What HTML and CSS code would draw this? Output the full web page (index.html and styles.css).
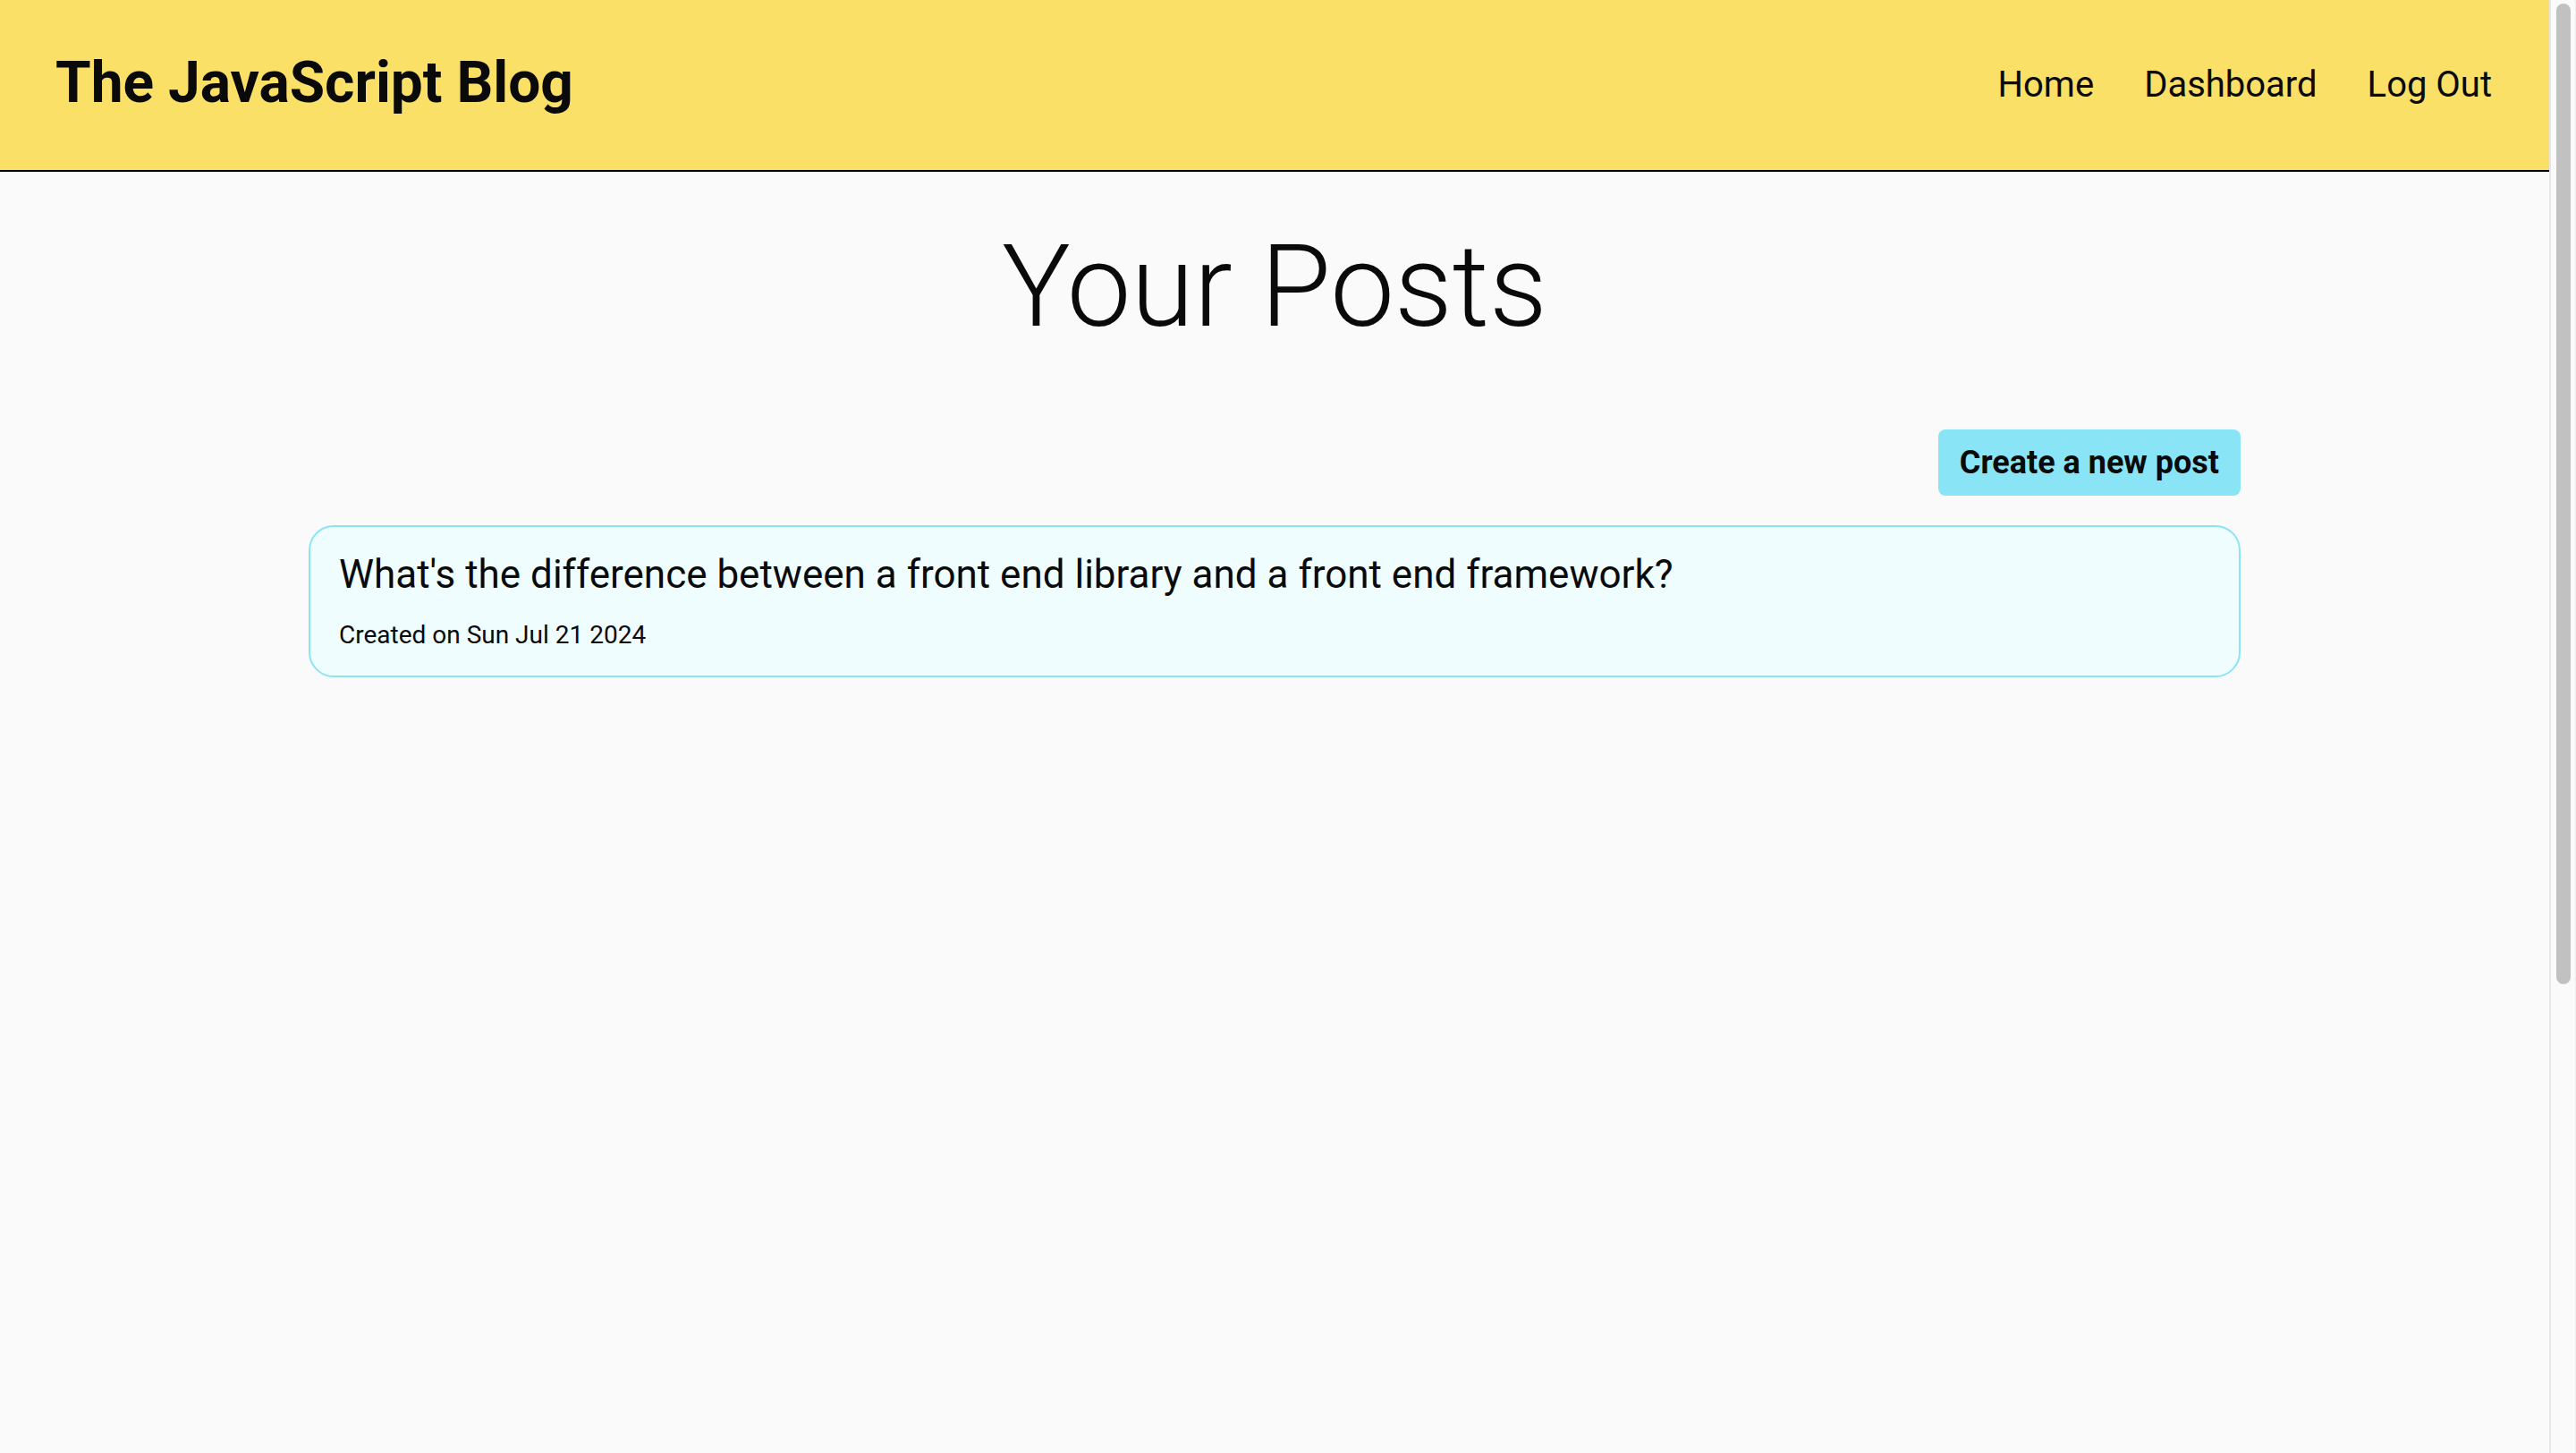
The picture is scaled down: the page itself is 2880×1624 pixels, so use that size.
FILE: index.html
```html
<!DOCTYPE html>
<html lang="en">
<head>
<meta charset="utf-8">
<title>The JavaScript Blog</title>
<link rel="stylesheet" href="styles.css">
</head>
<body>
<div class="page">
  <header class="site-header">
    <h1 class="brand">The JavaScript Blog</h1>
    <nav class="nav">
      <a class="nav-link" href="#">Home</a>
      <a class="nav-link" href="#">Dashboard</a>
      <a class="nav-link" href="#">Log Out</a>
    </nav>
  </header>
  <main class="main">
    <h2 class="page-title">Your Posts</h2>
    <div class="container">
      <div class="actions">
        <button class="btn-new">Create a new post</button>
      </div>
      <article class="post-card">
        <h3 class="post-title">What's the difference between a front end library and a front end framework?</h3>
        <p class="post-date">Created on Sun Jul 21 2024</p>
      </article>
    </div>
  </main>
</div>
<div class="scrollbar" aria-hidden="true"><div class="scrollbar-thumb"></div></div>
</body>
</html>
```

FILE: styles.css
```css
html {
  background: #fafafa;
}
body {
  margin: 0;
  background: #fafafa;
  font-family: Roboto, "Liberation Sans", sans-serif;
  color: #0a0a0a;
}
.page {
  margin-right: 30px;
}
.scrollbar {
  position: fixed;
  top: 0;
  right: 0;
  width: 30px;
  height: 100vh;
  box-sizing: border-box;
  background: #fafafa;
  border-left: 2px solid #e6e6e6;
  border-right: 1px solid #efefef;
}
.scrollbar-thumb {
  position: absolute;
  top: 4px;
  left: 6px;
  width: 16px;
  height: 1096px;
  border-radius: 8px;
  background: #c1c1c1;
}
.site-header {
  height: 190px;
  box-sizing: content-box;
  display: flex;
  align-items: center;
  justify-content: space-between;
  padding: 0 64px 0 62px;
  background: #fae066;
  border-bottom: 2px solid #000;
}
.brand {
  margin: 0;
  font-size: 64px;
  font-weight: 700;
  line-height: 1;
  position: relative;
  top: -2px;
}
.nav {
  display: flex;
  gap: 56px;
}
.nav-link {
  color: #0a0a0a;
  text-decoration: none;
  font-size: 40px;
  font-weight: 400;
  line-height: 1;
}
.main {
  display: flex;
  flex-direction: column;
  align-items: center;
}
.page-title {
  margin: 53px 0 0;
  font-size: 128px;
  font-weight: 300;
  line-height: 150px;
}
.container {
  width: 2160px;
  display: flex;
  flex-direction: column;
  margin-top: 85px;
}
.actions {
  display: flex;
  justify-content: flex-end;
}
.btn-new {
  height: 74px;
  padding: 0 24px;
  border: none;
  border-radius: 8px;
  background: #89e5f5;
  color: #0a0a0a;
  font-family: Roboto, "Liberation Sans", sans-serif;
  font-size: 36px;
  font-weight: 700;
}
.post-card {
  margin-top: 33px;
  height: 170px;
  box-sizing: border-box;
  padding: 0 32px;
  background: #effdfe;
  border: 2px solid #89e5f5;
  border-radius: 28px;
}
.post-title {
  margin: 27px 0 0;
  font-size: 44px;
  font-weight: 400;
  line-height: 53px;
}
.post-date {
  margin: 24px 0 0;
  font-size: 28px;
  line-height: 33px;
}
```
